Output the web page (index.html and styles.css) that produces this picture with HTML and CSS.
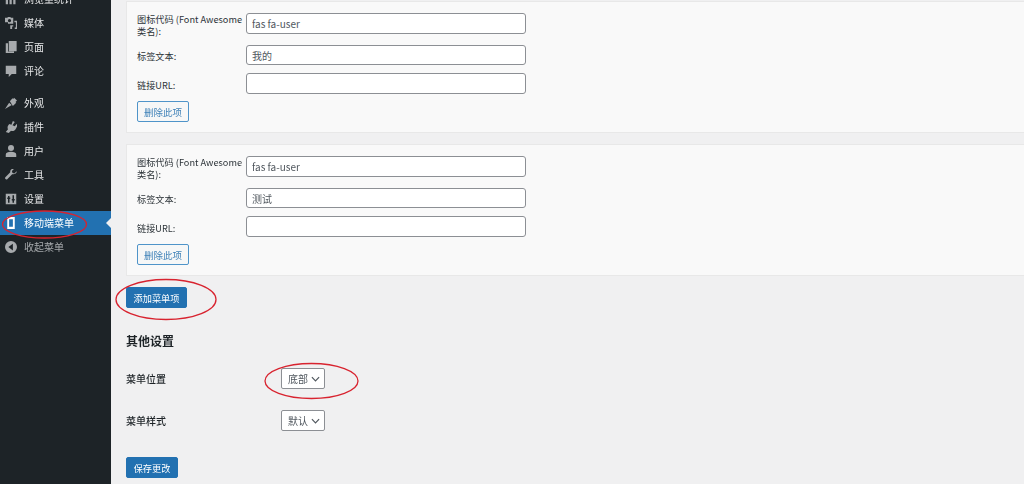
FILE: index.html
```html
<!DOCTYPE html>
<html lang="zh-CN">
<head>
<meta charset="utf-8">
<title>移动端菜单</title>
<link rel="stylesheet" href="styles.css">
</head>
<body>
<div class="page">
  <nav class="sidebar">
    <ul class="menu">
      <li class="item"><svg class="ico" viewBox="2 2 16 16"><path d="M3 3h3v14H3zM8 7h3v10H8zM13 10h3v7h-3z"/></svg><span>浏览量统计</span></li>
      <li class="item"><svg class="ico" viewBox="2 2 16 16"><path fill-rule="evenodd" d="M2 3h3l1-1h3l1 1h3v8H6v-2H2zM8 4.500a2.200 2.200 0 1 0 0 4.400 2.200 2.200 0 0 0 0-4.400z"/><path d="M14.500 7H18v11h-3v-2h1.500V9h-2zM9 13h4v1.500h-1.500V18H9z"/></svg><span>媒体</span></li>
      <li class="item"><svg class="ico" viewBox="2 2 16 16"><path d="M7 2h10.500v13.500H7zM3 5h3v11h8v2H3z"/></svg><span>页面</span></li>
      <li class="item"><svg class="ico" viewBox="2 2 16 16"><path d="M3 3h14v11h-6l-4 4v-4H3z"/></svg><span>评论</span></li>
      <li class="item sep"><svg class="ico" viewBox="2 2 16 16"><path d="M8.500 7.500L12 3.500l1 1 1-1.500 4 3.500-2 2 1 1-4.500 4.500zM7.500 9.500l3.500 3-9 5.500z"/></svg><span>外观</span></li>
      <li class="item"><svg class="ico" viewBox="2 2 16 16"><path d="M12.500 2l2.500 1.200-3 4.300 3 1.500 2.500-3 1.500 1.200-2.500 5c-1.300 2.700-4 3.800-6.500 2.800L7 18l-4-1.500 3-3.500c-1.200-2.500-.5-5 2-7l2.500 1z"/></svg><span>插件</span></li>
      <li class="item"><svg class="ico" viewBox="2 2 16 16"><circle cx="10" cy="6" r="4"/><path d="M3 18v-3c0-3 3-4 7-4s7 1 7 4v3z"/></svg><span>用户</span></li>
      <li class="item"><svg class="ico" viewBox="2 2 16 16"><path d="M17.500 5l-3 3-2.500-.8-.8-2.500 3-3C11.500 1 8.500 3 9 6.300L2.500 13c-1.500 1.500 1 4 2.500 2.500L11.500 9c3.500.7 6.700-1.500 6-4z"/></svg><span>工具</span></li>
      <li class="item"><svg class="ico" viewBox="2 2 16 16"><path fill-rule="evenodd" d="M3 3h14v14H3zM6 6v2H5v2h1v5h2v-5h1V8H8V6zM12 5v5h-1v2h1v3h2v-3h1v-2h-1V5z"/></svg><span>设置</span></li>
      <li class="item active"><svg class="ico" viewBox="2 2 16 16"><path fill-rule="evenodd" d="M5 2h10v16H5zM7.500 5v10h5V5z"/></svg><span>移动端菜单</span></li>
      <li class="item dim"><svg class="ico" viewBox="2 2 16 16"><path fill-rule="evenodd" d="M10 2a8 8 0 1 1 0 16 8 8 0 0 1 0-16zM12.500 5.500L6.500 10l6 4.500z"/></svg><span>收起菜单</span></li>
    </ul>
  </nav>
  <main class="content">
    <section class="card">
      <div class="row tall"><label class="lbl">图标代码 (Font Awesome 类名):</label><input class="field" value="fas fa-user"></div>
      <div class="row"><label class="lbl">标签文本:</label><input class="field" value="我的"></div>
      <div class="row"><label class="lbl">链接URL:</label><input class="field" value=""></div>
      <button class="btn">删除此项</button>
    </section>
    <section class="card">
      <div class="row tall"><label class="lbl">图标代码 (Font Awesome 类名):</label><input class="field" value="fas fa-user"></div>
      <div class="row"><label class="lbl">标签文本:</label><input class="field" value="测试"></div>
      <div class="row"><label class="lbl">链接URL:</label><input class="field" value=""></div>
      <button class="btn">删除此项</button>
    </section>
    <button class="primary add">添加菜单项</button>
    <h2 class="heading">其他设置</h2>
    <div class="setting"><span class="setlbl">菜单位置</span><div class="sel">底部<svg class="chev" viewBox="0 0 10 6"><path d="M1 1l4 4 4-4"/></svg></div></div>
    <div class="setting"><span class="setlbl">菜单样式</span><div class="sel">默认<svg class="chev" viewBox="0 0 10 6"><path d="M1 1l4 4 4-4"/></svg></div></div>
    <button class="primary save">保存更改</button>
  </main>
  <svg class="marks" viewBox="0 0 1024 484">
    <ellipse cx="44.500" cy="224.500" rx="42" ry="13.500"/>
    <ellipse cx="166" cy="299.500" rx="50" ry="20"/>
    <ellipse cx="311.500" cy="381" rx="46.500" ry="17.500"/>
  </svg>
</div>
</body>
</html>
```
FILE: styles.css
```css
* { box-sizing: border-box; }
html, body { margin: 0; height: 100%; overflow: hidden; }
body {
  background: #f0f0f1;
  color: #3c434a;
  font: 10px/14px "Noto Sans CJK SC", sans-serif;
}
.page { position: relative; display: flex; width: 1024px; height: 484px; overflow: hidden; filter: blur(.3px); }
.sidebar { width: 111px; flex: none; background: #1d2327; }
.menu { list-style: none; margin: -13px 0 0; padding: 0; }
.item {
  position: relative;
  display: flex;
  align-items: center;
  gap: 7px;
  height: 24px;
  padding-left: 5px;
  color: #e6e7e8;
  font-size: 10px;
}
.sep { margin-top: 8px; }
.ico { width: 12px; height: 12px; flex: none; fill: #a7aaad; }
.active { background: #2271b1; color: #fff; }
.active .ico { fill: #fff; }
.active::after {
  content: "";
  position: absolute;
  right: 0;
  top: 7px;
  border: 5px solid transparent;
  border-right-color: #f0f0f1;
  border-left-width: 0;
}
.dim { color: #a7aaad; }
.content { flex: 1; min-width: 0; padding: 1px 0 0 15px; }
.card {
  width: 920px;
  height: 132px;
  margin-bottom: 11px;
  padding: 11px 10px 0;
  background: #f9f9f9;
  border: 1px solid #e8e8e8;
  border-right: 0;
}
.row { display: flex; align-items: center; margin-bottom: 8px; height: 20px; }
.tall { margin-bottom: 11px; height: 21px; }
.row:nth-child(3) { height: 21px; margin-bottom: 7px; }
.lbl { width: 109px; flex: none; font-size: 9.200px; line-height: 12px; color: #2c3338; padding-top: 2px; }
.tall .lbl { padding-top: 3px; }
.field {
  width: 280px;
  height: 100%;
  padding: 0 5px;
  border: 1px solid #8c8f94;
  border-radius: 3px;
  background: #fff;
  color: #50575e;
  font: 10px "Noto Sans CJK SC", sans-serif;
}
.btn {
  display: block;
  height: 21px;
  width: 52px;
  padding: 0;
  border: 1px solid #4f94c9;
  border-radius: 2px;
  background: #f6f7f7;
  color: #3f82b8;
  font: 9.500px "Noto Sans CJK SC", sans-serif;
}
.primary {
  display: block;
  height: 21px;
  padding: 0;
  border: 1px solid #2271b1;
  border-radius: 2px;
  background: #2271b1;
  color: #fff;
  font: 9.200px "Noto Sans CJK SC", sans-serif;
}
.add { width: 61px; }
.save { width: 52px; margin-top: 26px; }
.heading { margin: 26px 0 0; height: 14px; font: 700 12px/14px "Noto Sans CJK SC", sans-serif; color: #1d2327; }
.setting { display: flex; align-items: center; height: 21px; }
.heading + .setting { margin-top: 20px; }
.setting + .setting { margin-top: 21px; }
.setlbl { width: 155px; flex: none; font-weight: 500; font-size: 10px; color: #1d2327; }
.sel {
  display: flex;
  align-items: center;
  justify-content: space-between;
  width: 44px;
  height: 21px;
  padding: 0 4px 0 6px;
  border: 1px solid #8c8f94;
  border-radius: 2px;
  background: #fff;
  color: #50575e;
  font-size: 10px;
}
.chev { width: 9px; height: 6px; fill: none; stroke: #50575e; stroke-width: 1.300; }
.marks { position: absolute; inset: 0; width: 1024px; height: 484px; pointer-events: none; }
.marks ellipse { fill: none; stroke: #d8232f; stroke-width: 1.300; }
```
